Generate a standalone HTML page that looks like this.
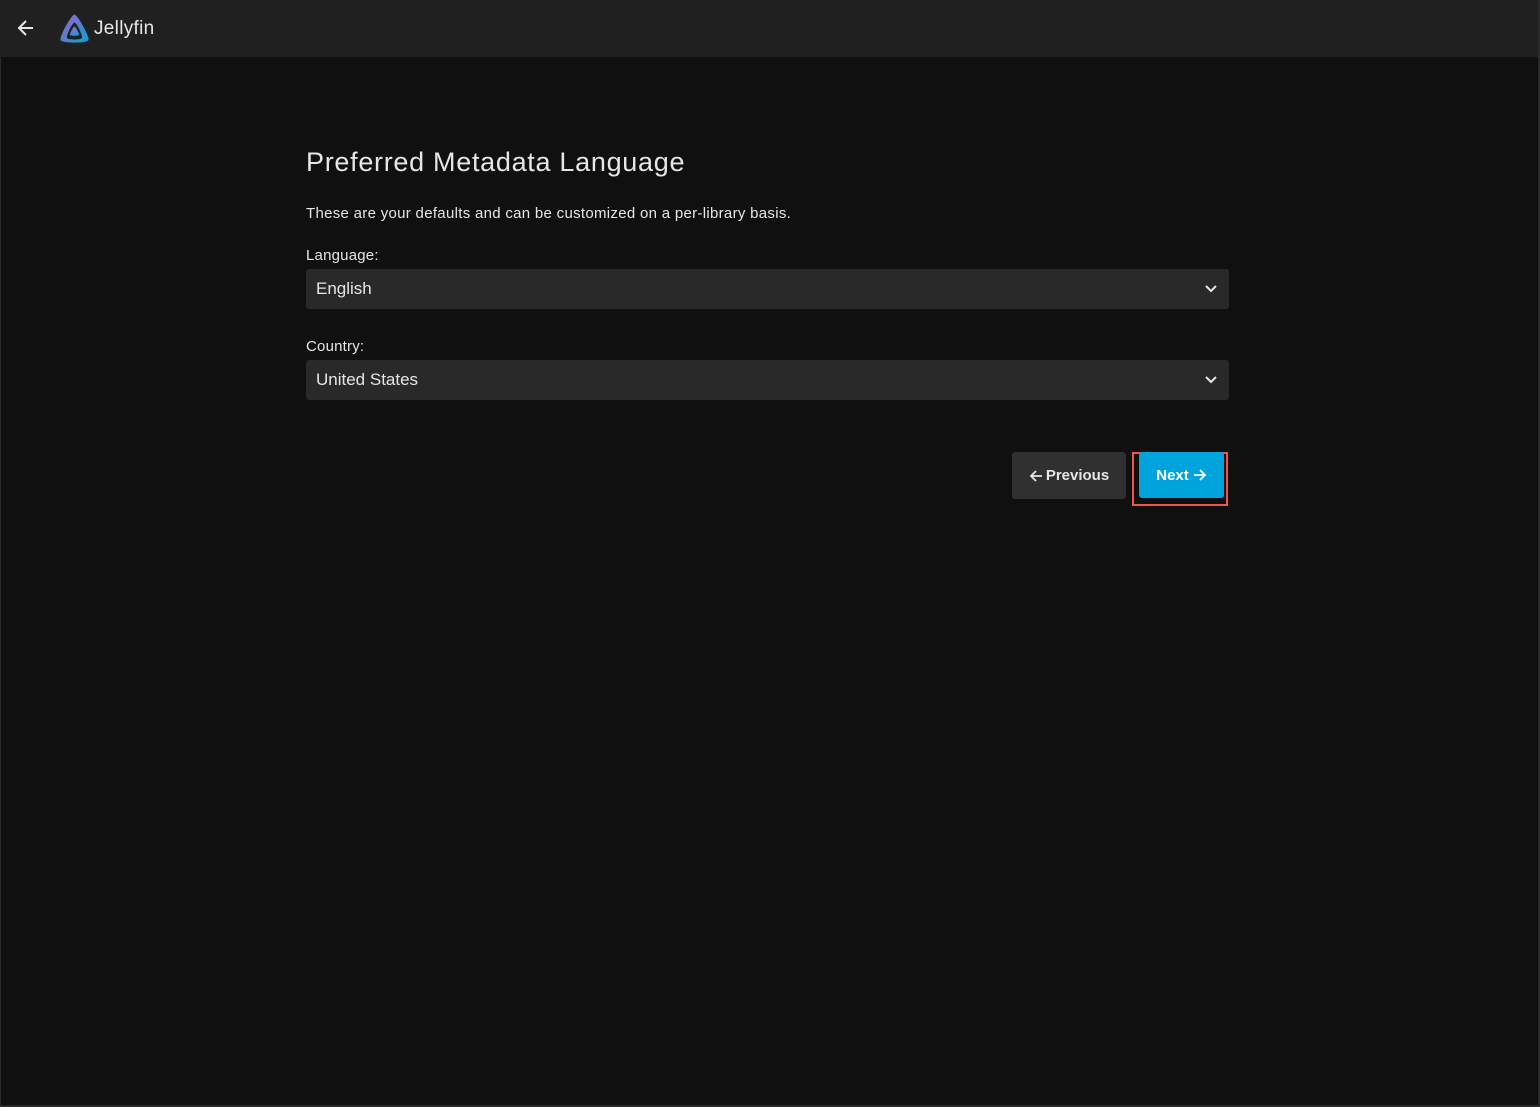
<!DOCTYPE html>
<html><head><meta charset="utf-8"><style>
*{box-sizing:border-box;margin:0;padding:0}
body{width:1540px;height:1107px;background:#101010;font-family:"Liberation Sans",sans-serif;color:#e6e6e6;position:relative;overflow:hidden}
.hdr{position:absolute;left:0;top:0;width:1540px;height:57px;background:#202020}
.edge{position:absolute;right:0;top:0;width:2px;height:1107px;background:#2a2a2a}
.ledge{position:absolute;left:0;top:57px;width:1px;height:1050px;background:#2a2a2a}
.bedge{position:absolute;left:0;bottom:0;width:1540px;height:2px;background:#2a2a2a}
h1{position:absolute;left:306px;top:147px;font-size:27px;font-weight:normal;color:#e6e6e6;letter-spacing:0.7px}
.p{position:absolute;left:306px;top:205px;font-size:15px;letter-spacing:0.3px}
.lbl{position:absolute;left:306px;font-size:15px;letter-spacing:0.2px}
.sel{position:absolute;left:306px;width:923px;height:40px;background:#292929;border-radius:3px;font-size:17px;padding:10px 10px;color:#e6e6e6}
.sel svg{position:absolute;right:12px;top:16px}
.btn{position:absolute;top:452px;height:47px;border-radius:3px;font-weight:bold;font-size:15px;display:flex;align-items:center;justify-content:center}
</style></head><body>
<div class="hdr">
<svg style="position:absolute;left:16px;top:18px" width="20" height="20" viewBox="0 0 20 20"><path d="M17 10H3M10 3L3 10l7 7" stroke="#e6e6e6" stroke-width="2" fill="none"/></svg>
<svg style="position:absolute;left:59px;top:13px" width="31" height="31" viewBox="0 0 31 31"><defs><linearGradient id="g" x1="0" y1="0" x2="1" y2="1"><stop offset="0" stop-color="#aa5cc3"/><stop offset="1" stop-color="#00a4dc"/></linearGradient></defs><path d="M15.5 1.5C12.5 1.5 0.5 23 1.5 27c1 3.5 27 3.5 28 0S18.5 1.5 15.5 1.5zM15.5 9.5c2.2 0 8.5 13.5 7.5 15.5-1 2-14 2-15 0s5.3-15.5 7.5-15.5z" fill="url(#g)" fill-rule="evenodd"/><path d="M15.5 13.5c-1.3 0-5 7.5-4.5 8.5s8.5 1 9 0-3.2-8.5-4.5-8.5z" fill="url(#g)"/></svg>
<div style="position:absolute;left:94px;top:18px;font-size:19px;color:#e6e6e6;letter-spacing:0.3px">Jellyfin</div>
</div>
<div class="edge"></div><div class="ledge"></div><div class="bedge"></div>
<h1>Preferred Metadata Language</h1>
<div class="p">These are your defaults and can be customized on a per-library basis.</div>
<div class="lbl" style="top:247px">Language:</div>
<div class="sel" style="top:269px">English<svg width="12" height="8" viewBox="0 0 12 8"><path d="M1 1l5 5 5-5" stroke="#e6e6e6" stroke-width="2" fill="none"/></svg></div>
<div class="lbl" style="top:338px">Country:</div>
<div class="sel" style="top:360px">United States<svg width="12" height="8" viewBox="0 0 12 8"><path d="M1 1l5 5 5-5" stroke="#e6e6e6" stroke-width="2" fill="none"/></svg></div>
<div class="btn" style="left:1012px;width:114px;background:#303030;color:#e6e6e6"><svg width="14" height="14" viewBox="0 0 14 14" style="margin-right:3px"><path d="M13 7H2M7 2L2 7l5 5" stroke="#e6e6e6" stroke-width="1.8" fill="none"/></svg>Previous</div>
<div style="position:absolute;left:1132px;top:452px;width:96px;height:54px;border:2px solid #f0544f"></div>
<div class="btn" style="left:1139px;width:85px;height:46px;background:#00a4dc;color:#fff">Next<svg width="14" height="14" viewBox="0 0 14 14" style="margin-left:4px"><path d="M1 7h11M7 2l5 5-5 5" stroke="#fff" stroke-width="1.8" fill="none"/></svg></div>
</body></html>
